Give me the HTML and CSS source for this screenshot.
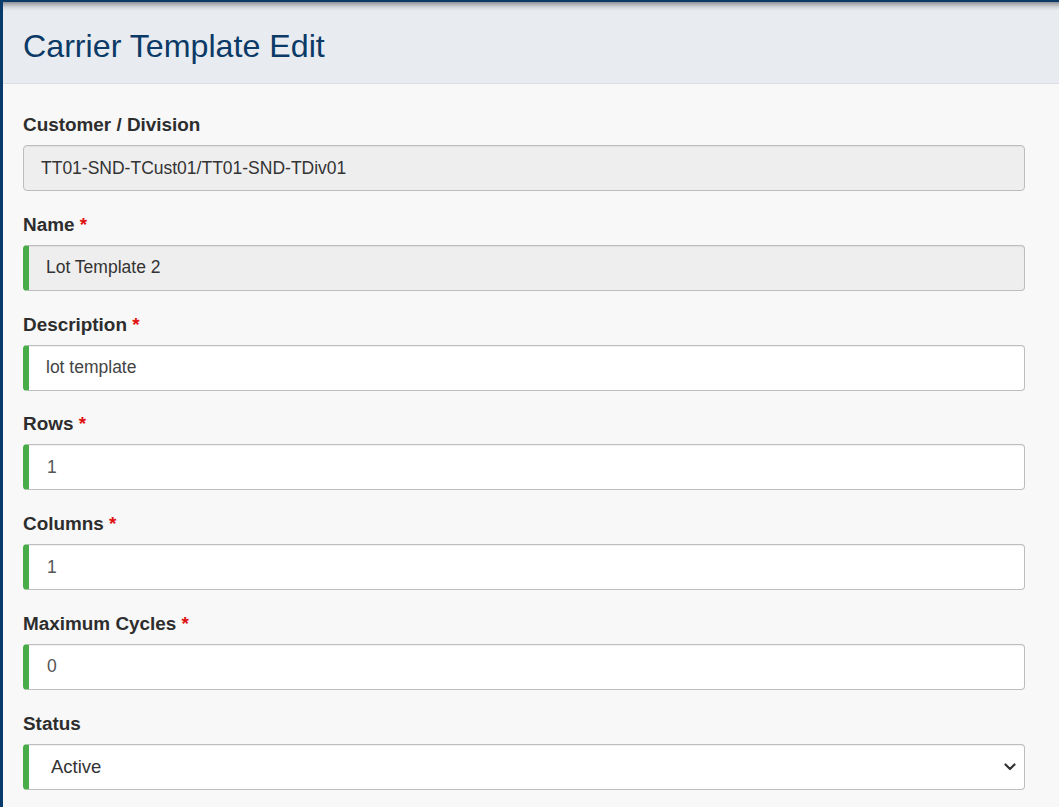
FILE: index.html
```html
<!DOCTYPE html>
<html lang="en">
<head>
<meta charset="utf-8">
<title>Carrier Template Edit</title>
<link rel="stylesheet" href="styles.css">
</head>
<body>
<div class="layout">
  <div class="rail"></div>
  <main class="main">
    <header class="page-header">
      <h1 class="page-title">Carrier Template Edit</h1>
    </header>
    <form class="form">
      <div class="group">
        <label class="label">Customer / Division</label>
        <input class="field field-disabled" type="text" value="TT01-SND-TCust01/TT01-SND-TDiv01" disabled>
      </div>
      <div class="group">
        <label class="label">Name <span class="req">*</span></label>
        <input class="field field-disabled field-valid" type="text" value="Lot Template 2" disabled>
      </div>
      <div class="group">
        <label class="label">Description <span class="req">*</span></label>
        <input class="field field-valid" type="text" value="lot template">
      </div>
      <div class="group">
        <label class="label">Rows <span class="req">*</span></label>
        <input class="field field-valid field-num" type="text" value="1">
      </div>
      <div class="group">
        <label class="label">Columns <span class="req">*</span></label>
        <input class="field field-valid field-num" type="text" value="1">
      </div>
      <div class="group">
        <label class="label">Maximum Cycles <span class="req">*</span></label>
        <input class="field field-valid field-num" type="text" value="0">
      </div>
      <div class="group">
        <label class="label">Status</label>
        <div class="select-wrap">
          <select class="field field-valid field-select">
            <option selected>Active</option>
            <option>Inactive</option>
          </select>
          <svg class="chevron" width="12" height="8" viewBox="0 0 12 8" aria-hidden="true">
            <path d="M1.5 1.5 L6 6 L10.5 1.5" fill="none" stroke="#333" stroke-width="2.2" stroke-linecap="round" stroke-linejoin="round"/>
          </svg>
        </div>
      </div>
    </form>
  </main>
</div>
</body>
</html>
```
FILE: styles.css
```css
* { box-sizing: border-box; }
html, body { margin: 0; padding: 0; }
body {
  font-family: "Liberation Sans", Arial, sans-serif;
  background: #f8f8f8;
  color: #333;
}
.layout {
  display: flex;
  min-height: 807px;
}
.rail {
  width: 3px;
  flex: 0 0 3px;
  background: #083b6c;
}
.main {
  flex: 1;
  min-width: 0;
}
.page-header {
  height: 84px;
  border-top: 2px solid #0b3a66;
  background: linear-gradient(to bottom, #8d9095 0px, #b9bcc1 3px, #d9dce1 6px, #e8ebf0 9px, #e8ebf0 100%);
  border-bottom: 1px solid #dcdfe6;
  display: flex;
  align-items: center;
  padding: 7px 20px 0;
}
.page-title {
  margin: 0;
  font-size: 32.2px;
  font-weight: 400;
  color: #0c3a66;
  letter-spacing: 0;
}
.form {
  padding: 28px 34px 0 20px;
}
.group {
  margin-bottom: 20.8px;
}
.label {
  display: block;
  font-size: 18.9px;
  line-height: 26px;
  font-weight: 700;
  color: #2d2d2d;
  margin-bottom: 7px;
}
.req {
  color: #e01010;
}
.field {
  display: block;
  width: 100%;
  height: 46px;
  padding: 0 17px;
  font-family: "Liberation Sans", Arial, sans-serif;
  font-size: 17.5px;
  color: #444;
  background: #fff;
  border: 1px solid #bdbdbd;
  border-radius: 4px;
  outline: none;
  box-shadow: inset 0 1px 1px rgba(0,0,0,0.06);
}
.field-disabled {
  background: #eeeeee;
  color: #333;
  -webkit-text-fill-color: #333;
  opacity: 1;
}
.field-valid {
  border-left: 6px solid #48ad48;
}
.field-num {
  color: #555;
  -webkit-text-fill-color: #555;
  padding-left: 18px;
}
.select-wrap {
  position: relative;
}
.field-select {
  appearance: none;
  -webkit-appearance: none;
  padding-left: 22px;
  color: #333;
  font-size: 18.5px;
}
.chevron {
  position: absolute;
  right: 9px;
  top: 19px;
  pointer-events: none;
}
```
